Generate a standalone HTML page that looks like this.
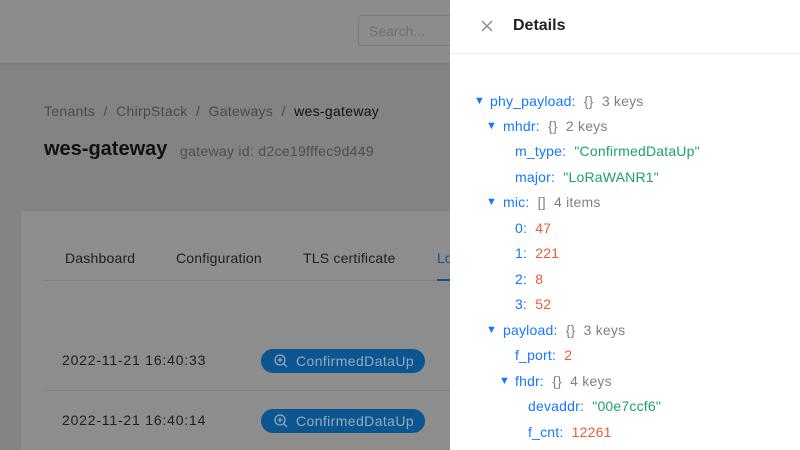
<!DOCTYPE html>
<html><head><meta charset="utf-8"><style>
*{margin:0;padding:0;box-sizing:border-box}
html,body{width:800px;height:450px;overflow:hidden}
body{position:relative;font-family:"Liberation Sans",sans-serif;background:#828384}
.a{position:absolute;white-space:nowrap}
.hdr{left:0;top:0;width:450px;height:63px;background:#8c8c8c;box-shadow:0 1px 3px rgba(0,0,0,.1)}
.search{left:358px;top:15px;width:100px;height:31px;border:1px solid #7a7a7a;border-radius:3px;color:#6f6f6f;font-size:14px;padding:7px 10px}
.card{left:21px;top:211px;width:440px;height:239px;background:#8d8d8d}
.drawer{left:450px;top:0;width:350px;height:450px;background:#fff}
.k{color:#1677ff}.s{color:#1aa36a}.n{color:#f4583a}.m{color:#808080}
.row{position:absolute;font-size:14px;white-space:nowrap;line-height:18px;letter-spacing:.2px}
.tri{position:absolute;font-size:11px;color:#1677ff}
.btn{width:164px;height:24px;border-radius:12px;background:#0b5690;color:#97a9bb;font-size:14px;line-height:24px;padding-left:35px;letter-spacing:.4px}
</style></head><body>
<div class="a hdr"></div>
<div class="a search">Search...</div>
<div class="a" style="left:44px;top:103px;font-size:14px;color:#4a4a4a;letter-spacing:.3px">Tenants &nbsp;/&nbsp; ChirpStack &nbsp;/&nbsp; Gateways &nbsp;/&nbsp; <span style="color:#111">wes-gateway</span></div>
<div class="a" style="left:44px;top:138px;font-size:20px;font-weight:bold;color:#111">wes-gateway</div>
<div class="a" style="left:180px;top:143px;font-size:14px;color:#4e4e4e;letter-spacing:.3px">gateway id: d2ce19fffec9d449</div>
<div class="a card"></div>
<div class="a" style="left:65px;top:250px;font-size:14px;color:#1e1e1e;letter-spacing:.2px">Dashboard</div>
<div class="a" style="left:176px;top:250px;font-size:14px;color:#1e1e1e;letter-spacing:.2px">Configuration</div>
<div class="a" style="left:303px;top:250px;font-size:14px;color:#1e1e1e;letter-spacing:.2px">TLS certificate</div>
<div class="a" style="left:437px;top:250px;font-size:14px;color:#0b5690">Lo</div>
<div class="a" style="left:45px;top:280px;width:405px;height:1px;background:#7f7f7f"></div>
<div class="a" style="left:437px;top:279px;width:13px;height:2px;background:#0b5690"></div>
<div class="a" style="left:62px;top:352px;font-size:14px;color:#1e1e1e;letter-spacing:.8px">2022-11-21 16:40:33</div>
<div class="a btn" style="left:261px;top:349px">ConfirmedDataUp</div>
<svg class="a" style="left:273px;top:353px" width="16" height="16" viewBox="0 0 16 16" fill="none" stroke="#97a9bb" stroke-width="1.3"><circle cx="7" cy="7" r="5"/><path d="M10.6 10.6L14 14M7 4.6v4.8M4.6 7h4.8"/></svg>
<div class="a" style="left:45px;top:390px;width:405px;height:1px;background:#828282"></div>
<div class="a" style="left:62px;top:412px;font-size:14px;color:#1e1e1e;letter-spacing:.8px">2022-11-21 16:40:14</div>
<div class="a btn" style="left:261px;top:409px">ConfirmedDataUp</div>
<svg class="a" style="left:273px;top:413px" width="16" height="16" viewBox="0 0 16 16" fill="none" stroke="#97a9bb" stroke-width="1.3"><circle cx="7" cy="7" r="5"/><path d="M10.6 10.6L14 14M7 4.6v4.8M4.6 7h4.8"/></svg>

<div class="a drawer">
 <div class="a" style="left:0;top:53px;width:350px;height:1px;background:#eee"></div>
 <svg class="a" style="left:31px;top:20px" width="12" height="12" viewBox="0 0 12 12" stroke="#888" stroke-width="1.3"><path d="M1 1L11 11M11 1L1 11"/></svg>
 <div class="a" style="left:63px;top:17px;font-size:16px;font-weight:bold;color:#222">Details</div>

 <span class="tri" style="left:24px;top:95px">▼</span><div class="row" style="left:40px;top:92px"><span class="k">phy_payload:</span>&nbsp; <span class="m">{}&nbsp; 3 keys</span></div>
 <span class="tri" style="left:36px;top:120px">▼</span><div class="row" style="left:53px;top:117px"><span class="k">mhdr:</span>&nbsp; <span class="m">{}&nbsp; 2 keys</span></div>
 <div class="row" style="left:65px;top:142px"><span class="k">m_type:</span>&nbsp; <span class="s">"ConfirmedDataUp"</span></div>
 <div class="row" style="left:65px;top:168px"><span class="k">major:</span>&nbsp; <span class="s">"LoRaWANR1"</span></div>
 <span class="tri" style="left:36px;top:196px">▼</span><div class="row" style="left:53px;top:193px"><span class="k">mic:</span>&nbsp; <span class="m">[]&nbsp; 4 items</span></div>
 <div class="row" style="left:65px;top:219px"><span class="k">0:</span>&nbsp; <span class="n">47</span></div>
 <div class="row" style="left:65px;top:244px"><span class="k">1:</span>&nbsp; <span class="n">221</span></div>
 <div class="row" style="left:65px;top:270px"><span class="k">2:</span>&nbsp; <span class="n">8</span></div>
 <div class="row" style="left:65px;top:295px"><span class="k">3:</span>&nbsp; <span class="n">52</span></div>
 <span class="tri" style="left:36px;top:324px">▼</span><div class="row" style="left:53px;top:321px"><span class="k">payload:</span>&nbsp; <span class="m">{}&nbsp; 3 keys</span></div>
 <div class="row" style="left:65px;top:346px"><span class="k">f_port:</span>&nbsp; <span class="n">2</span></div>
 <span class="tri" style="left:49px;top:375px">▼</span><div class="row" style="left:65px;top:372px"><span class="k">fhdr:</span>&nbsp; <span class="m">{}&nbsp; 4 keys</span></div>
 <div class="row" style="left:78px;top:397px"><span class="k">devaddr:</span>&nbsp; <span class="s">"00e7ccf6"</span></div>
 <div class="row" style="left:78px;top:423px"><span class="k">f_cnt:</span>&nbsp; <span class="n">12261</span></div>
</div>
</body></html>
